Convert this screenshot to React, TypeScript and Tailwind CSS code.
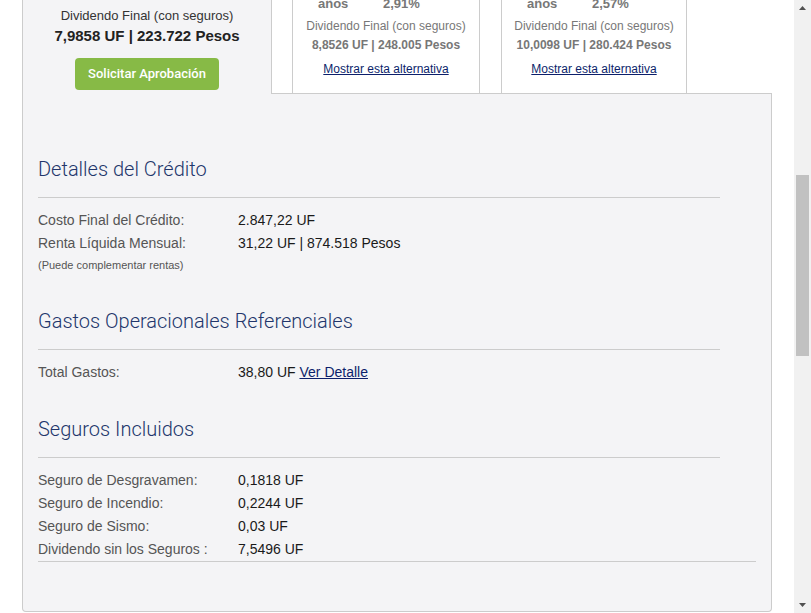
import React from 'react';

const arial = "font-['Liberation_Sans',Arial,sans-serif]";
const roboto = "font-['Roboto','Liberation_Sans',sans-serif]";

type Alt = { rate: string; monto: string };

const alternatives: Alt[] = [
  { rate: '2,91%', monto: '8,8526 UF | 248.005 Pesos' },
  { rate: '2,57%', monto: '10,0098 UF | 280.424 Pesos' },
];

const AltCard: React.FC<{ alt: Alt; width: string }> = ({ alt, width }) => (
  <div className={`${width} h-full border-x border-[#cccccc] bg-white flex flex-col items-center text-[12px] text-[#777]`}>
    <div className="-mt-[4px] w-full flex pl-[25px] text-[13px] font-bold leading-[16px]">
      <span className="w-[65px]">años</span>
      <span>{alt.rate}</span>
    </div>
    <p className="mt-[6px] leading-[16px]">Dividendo Final (con seguros)</p>
    <p className="mt-[3px] font-bold leading-[16px]">{alt.monto}</p>
    <a className="mt-[8px] leading-[16px] text-[#0c1f6b] underline">Mostrar esta alternativa</a>
  </div>
);

const Heading: React.FC<{ children: React.ReactNode; mt: string }> = ({ children, mt }) => (
  <>
    <h2 className={`${mt} ${roboto} text-[20px] leading-[28px] font-light text-[#22366b]`}>{children}</h2>
    <div className="mt-[14px] h-px w-[682px] bg-[#cccccc]" />
  </>
);

const Row: React.FC<{ label: string; children: React.ReactNode }> = ({ label, children }) => (
  <div className="flex leading-[23px] text-[14px]">
    <span className="w-[200px] text-[#555]">{label}</span>
    <span className="text-[#1a1a1a]">{children}</span>
  </div>
);

const Scrollbar: React.FC = () => (
  <div className="w-[17px] h-full bg-[#f1f1f1] flex flex-col items-center">
    <svg width="17" height="17" viewBox="0 0 17 17">
      <path d="M5 10 L8.5 6 L12 10 Z" fill="#505050" />
    </svg>
    <div className="mt-[158px] w-[13px] h-[181px] bg-[#c1c1c1]" />
    <div className="flex-1" />
    <svg width="17" height="17" viewBox="0 0 17 17">
      <path d="M5 7 L12 7 L8.5 11 Z" fill="#505050" />
    </svg>
  </div>
);

export default function App() {
  return (
    <div className={`flex w-[811px] h-[613px] overflow-hidden bg-white ${arial}`}>
      <div className="flex-1 min-w-0">
        <div className="mx-auto w-[750px]">
          {/* Top: selected alternative + other cards */}
          <div className="flex h-[94px]">
            <div className="w-[249px] border-l border-[#cccccc] bg-[#f4f4f6] flex flex-col items-center">
              <p className="mt-[7px] text-[13px] leading-[18px] text-[#333]">Dividendo Final (con seguros)</p>
              <p className="mt-[2px] text-[15px] leading-[18px] font-bold text-[#222]">7,9858 UF | 223.722 Pesos</p>
              <button className={`mt-[13px] w-[144px] h-[32px] rounded-[4px] bg-[#87ba46] text-white text-[13px] font-medium ${roboto}`}>
                Solicitar Aprobación
              </button>
            </div>
            <div className="flex-1 border-l border-b border-[#cccccc] bg-white flex pl-[20px] gap-[21px]">
              <AltCard alt={alternatives[0]} width="w-[188px]" />
              <AltCard alt={alternatives[1]} width="w-[186px]" />
            </div>
          </div>

          {/* Detail panel */}
          <div className="flex flex-col bg-[#f4f4f6] border-x border-b border-[#cccccc] rounded-b-[4px] pl-[15px] pb-[49px]">
            <Heading mt="mt-[61px]">Detalles del Crédito</Heading>
            <div className="mt-[11px]">
              <Row label="Costo Final del Crédito:">2.847,22 UF</Row>
              <Row label="Renta Líquida Mensual:">31,22 UF | 874.518 Pesos</Row>
              <p className="text-[11px] leading-[20px] text-[#555]">(Puede complementar rentas)</p>
            </div>

            <Heading mt="mt-[32px]">Gastos Operacionales Referenciales</Heading>
            <div className="mt-[11px]">
              <Row label="Total Gastos:">
                38,80 UF <a className="text-[#0c1f6b] underline">Ver Detalle</a>
              </Row>
            </div>

            <Heading mt="mt-[31px]">Seguros Incluidos</Heading>
            <div className="mt-[11px]">
              <Row label="Seguro de Desgravamen:">0,1818 UF</Row>
              <Row label="Seguro de Incendio:">0,2244 UF</Row>
              <Row label="Seguro de Sismo:">0,03 UF</Row>
              <Row label="Dividendo sin los Seguros :">7,5496 UF</Row>
            </div>
            <div className="h-px w-[718px] bg-[#cccccc]" />
          </div>
        </div>
      </div>
      <Scrollbar />
    </div>
  );
}
